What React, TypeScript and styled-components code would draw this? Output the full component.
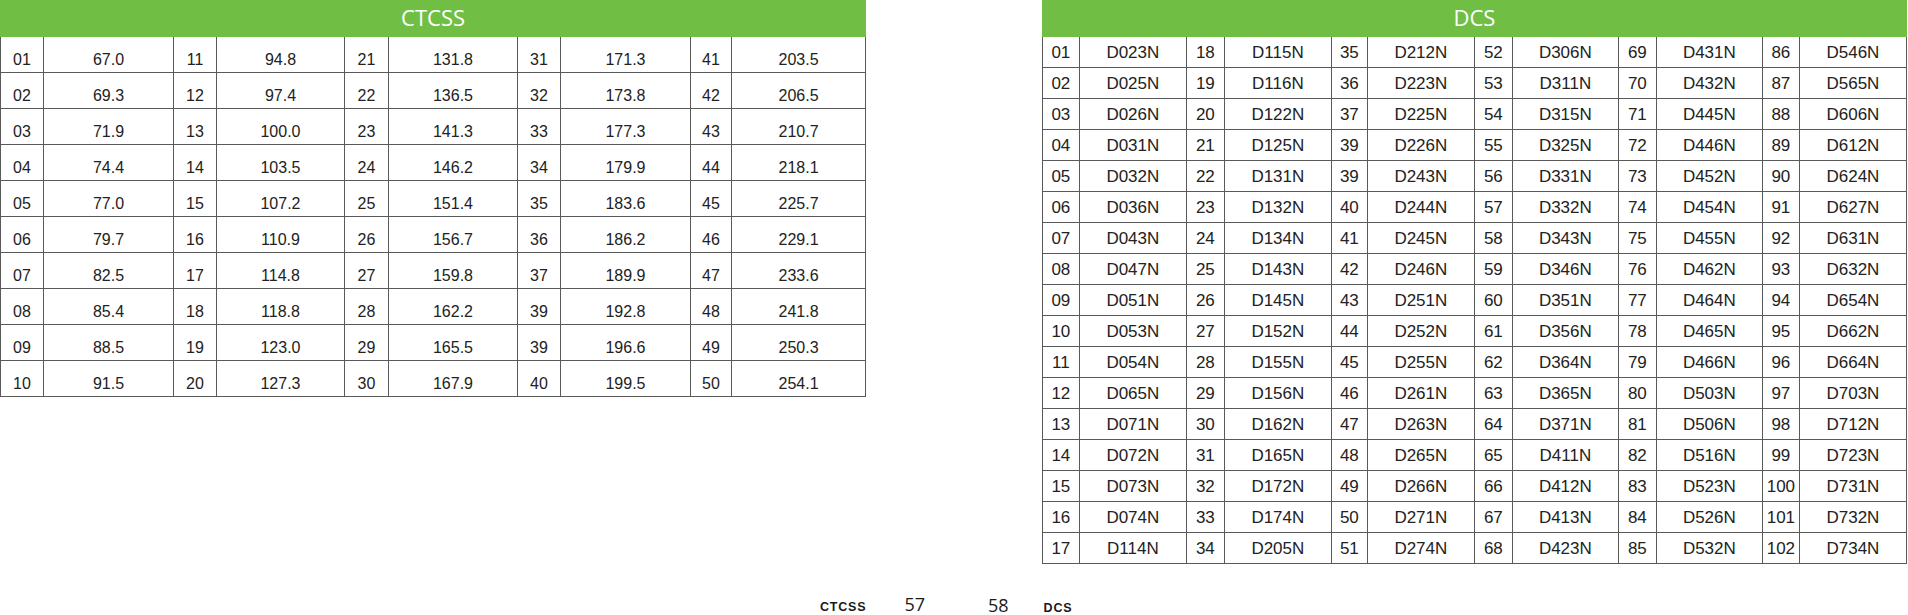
import React from "react";
import styled, { createGlobalStyle } from "styled-components";

const GREEN = "#70bf44";
const LINE = "#595959";
const INK = "#222222";
const CELL_FONT = '"Liberation Sans", Arial, sans-serif';
const HEAD_FONT = '"Open Sans", "Noto Sans", sans-serif';

const GlobalStyle = createGlobalStyle`
  html, body {
    margin: 0;
    padding: 0;
    background: #ffffff;
  }
`;

const Root = styled.div`
  width: 1908px;
  height: 615px;
  display: flex;
  flex-direction: column;
  overflow: hidden;
  font-family: ${CELL_FONT};
  color: ${INK};
`;

const TablesRow = styled.div`
  display: flex;
  justify-content: space-between;
  align-items: flex-start;
  padding-right: 1px;
`;

const Table = styled.table<{ $width: number }>`
  width: ${(p) => p.$width}px;
  border-collapse: collapse;
  table-layout: fixed;
`;

const Row = styled.tr<{ $h: number }>`
  height: ${(p) => p.$h}px;
`;

const HeadCell = styled.th`
  padding: 0 0 3px;
  background: ${GREEN};
  border: 1px solid ${GREEN};
  color: #ffffff;
  font-family: ${HEAD_FONT};
  font-size: 22px;
  font-weight: 400;
  line-height: 26px;
  text-align: center;
  vertical-align: middle;
`;

const Cell = styled.td<{ $size: number; $shift: number }>`
  padding: ${(p) => p.$shift}px 0 0;
  border: 1px solid ${LINE};
  font-size: ${(p) => p.$size}px;
  line-height: ${(p) => p.$size}px;
  text-align: center;
  vertical-align: middle;
  white-space: nowrap;
`;

const Footer = styled.div`
  margin-top: auto;
  display: grid;
  grid-template-columns: 1fr 1fr;
  align-items: end;
  height: 30px;
`;

const FootSide = styled.div<{ $right?: boolean }>`
  display: flex;
  align-items: baseline;
  justify-content: ${(p) => (p.$right ? "flex-start" : "flex-end")};
  gap: ${(p) => (p.$right ? 35 : 38)}px;
  padding: ${(p) => (p.$right ? "0 0 1px 34px" : "0 29px 2px 0")};
`;

const FootLabel = styled.span`
  font-family: ${CELL_FONT};
  font-size: 12.5px;
  font-weight: 700;
  letter-spacing: 0.8px;
  color: #1a1a1a;
  line-height: 1;
`;

const PageNo = styled.span`
  font-family: ${HEAD_FONT};
  font-size: 18px;
  color: #1a1a1a;
  line-height: 1;
`;

const ctcssWidths = [43, 130, 43, 128, 44, 129, 43, 130, 41, 134];
const ctcssNums = [
  ["01", "02", "03", "04", "05", "06", "07", "08", "09", "10"],
  ["11", "12", "13", "14", "15", "16", "17", "18", "19", "20"],
  ["21", "22", "23", "24", "25", "26", "27", "28", "29", "30"],
  ["31", "32", "33", "34", "35", "36", "37", "39", "39", "40"],
  ["41", "42", "43", "44", "45", "46", "47", "48", "49", "50"],
];
const ctcssVals = [
  ["67.0", "69.3", "71.9", "74.4", "77.0", "79.7", "82.5", "85.4", "88.5", "91.5"],
  ["94.8", "97.4", "100.0", "103.5", "107.2", "110.9", "114.8", "118.8", "123.0", "127.3"],
  ["131.8", "136.5", "141.3", "146.2", "151.4", "156.7", "159.8", "162.2", "165.5", "167.9"],
  ["171.3", "173.8", "177.3", "179.9", "183.6", "186.2", "189.9", "192.8", "196.6", "199.5"],
  ["203.5", "206.5", "210.7", "218.1", "225.7", "229.1", "233.6", "241.8", "250.3", "254.1"],
];

const dcsWidths = [37, 107, 38, 107, 36, 107, 38, 106, 38, 106, 37, 107];
const dcsNums = [
  ["01", "02", "03", "04", "05", "06", "07", "08", "09", "10", "11", "12", "13", "14", "15", "16", "17"],
  ["18", "19", "20", "21", "22", "23", "24", "25", "26", "27", "28", "29", "30", "31", "32", "33", "34"],
  ["35", "36", "37", "39", "39", "40", "41", "42", "43", "44", "45", "46", "47", "48", "49", "50", "51"],
  ["52", "53", "54", "55", "56", "57", "58", "59", "60", "61", "62", "63", "64", "65", "66", "67", "68"],
  ["69", "70", "71", "72", "73", "74", "75", "76", "77", "78", "79", "80", "81", "82", "83", "84", "85"],
  ["86", "87", "88", "89", "90", "91", "92", "93", "94", "95", "96", "97", "98", "99", "100", "101", "102"],
];
const dcsVals = [
  ["D023N", "D025N", "D026N", "D031N", "D032N", "D036N", "D043N", "D047N", "D051N", "D053N", "D054N", "D065N", "D071N", "D072N", "D073N", "D074N", "D114N"],
  ["D115N", "D116N", "D122N", "D125N", "D131N", "D132N", "D134N", "D143N", "D145N", "D152N", "D155N", "D156N", "D162N", "D165N", "D172N", "D174N", "D205N"],
  ["D212N", "D223N", "D225N", "D226N", "D243N", "D244N", "D245N", "D246N", "D251N", "D252N", "D255N", "D261N", "D263N", "D265N", "D266N", "D271N", "D274N"],
  ["D306N", "D311N", "D315N", "D325N", "D331N", "D332N", "D343N", "D346N", "D351N", "D356N", "D364N", "D365N", "D371N", "D411N", "D412N", "D413N", "D423N"],
  ["D431N", "D432N", "D445N", "D446N", "D452N", "D454N", "D455N", "D462N", "D464N", "D465N", "D466N", "D503N", "D506N", "D516N", "D523N", "D526N", "D532N"],
  ["D546N", "D565N", "D606N", "D612N", "D624N", "D627N", "D631N", "D632N", "D654N", "D662N", "D664N", "D703N", "D712N", "D723N", "D731N", "D732N", "D734N"],
];

interface CodeTableProps {
  title: string;
  width: number;
  widths: number[];
  nums: string[][];
  vals: string[][];
  rowHeight: number;
  fontSize: number;
  shift: number;
}

const CodeTable: React.FC<CodeTableProps> = ({ title, width, widths, nums, vals, rowHeight, fontSize, shift }) => {
  const rows = nums[0].length;
  return (
    <Table $width={width}>
      <colgroup>
        {widths.map((w, i) => (
          <col key={i} style={{ width: w }} />
        ))}
      </colgroup>
      <thead>
        <Row $h={36}>
          <HeadCell colSpan={widths.length}>{title}</HeadCell>
        </Row>
      </thead>
      <tbody>
        {Array.from({ length: rows }).map((_, r) => (
          <Row key={r} $h={rowHeight}>
            {nums.map((col, c) => (
              <React.Fragment key={c}>
                <Cell $size={fontSize} $shift={shift}>{col[r]}</Cell>
                <Cell $size={fontSize} $shift={shift}>{vals[c][r]}</Cell>
              </React.Fragment>
            ))}
          </Row>
        ))}
      </tbody>
    </Table>
  );
};

export default function App() {
  return (
    <Root>
      <GlobalStyle />
      <TablesRow>
        <CodeTable
          title="CTCSS"
          width={866}
          widths={ctcssWidths}
          nums={ctcssNums}
          vals={ctcssVals}
          rowHeight={36}
          fontSize={16}
          shift={10}
        />
        <CodeTable
          title="DCS"
          width={864}
          widths={dcsWidths}
          nums={dcsNums}
          vals={dcsVals}
          rowHeight={31}
          fontSize={17}
          shift={0}
        />
      </TablesRow>
      <Footer>
        <FootSide>
          <FootLabel>CTCSS</FootLabel>
          <PageNo>57</PageNo>
        </FootSide>
        <FootSide $right>
          <PageNo>58</PageNo>
          <FootLabel>DCS</FootLabel>
        </FootSide>
      </Footer>
    </Root>
  );
}
